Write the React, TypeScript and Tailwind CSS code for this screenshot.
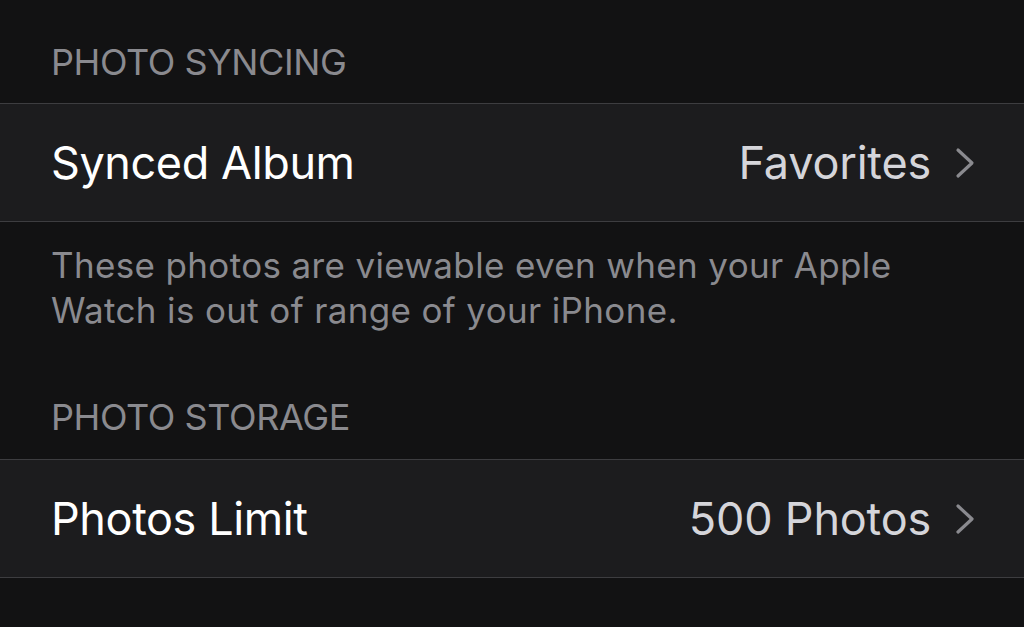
import React from "react";

const font = { fontFamily: "Inter, 'Noto Sans', sans-serif" };

function Chevron() {
  return (
    <svg width="22" height="32" viewBox="0 0 22 32" className="ml-[24px] shrink-0">
      <path d="M3 3 L17 16 L3 29" fill="none" stroke="#8a8a8f" strokeWidth="3.2" strokeLinecap="round" strokeLinejoin="round" />
    </svg>
  );
}

function Row({ label, value }: { label: string; value: string }) {
  return (
    <div className="h-[119px] bg-[#1c1c1e] border-y border-[#3d3d40] flex items-center pl-[51px] pr-[47px]">
      <div className="flex-1 text-white text-[45px] leading-none tracking-[-0.4px]">{label}</div>
      <div className="text-[#d5d5da] text-[45px] leading-none tracking-[-0.2px]">{value}</div>
      <Chevron />
    </div>
  );
}

export default function App() {
  return (
    <div className="w-[1024px] h-[627px] bg-[#121213] overflow-hidden" style={font}>
      <div className="h-[103px] flex items-end pl-[51px] pb-[23px]">
        <div className="text-[#8a8a8f] text-[36px] leading-none tracking-[-0.4px]">PHOTO SYNCING</div>
      </div>
      <Row label="Synced Album" value="Favorites" />
      <div className="pl-[51px] pr-[40px] pt-[21px] text-[#8a8a8f] text-[35px] leading-[45px] tracking-[0.35px]">
        These photos are viewable even when your Apple
        <br />
        Watch is out of range of your iPhone.
      </div>
      <div className="h-[126px] flex items-end pl-[51px] pb-[24px]">
        <div className="text-[#8a8a8f] text-[36px] leading-none tracking-[-0.4px]">PHOTO STORAGE</div>
      </div>
      <Row label="Photos Limit" value="500 Photos" />
    </div>
  );
}
